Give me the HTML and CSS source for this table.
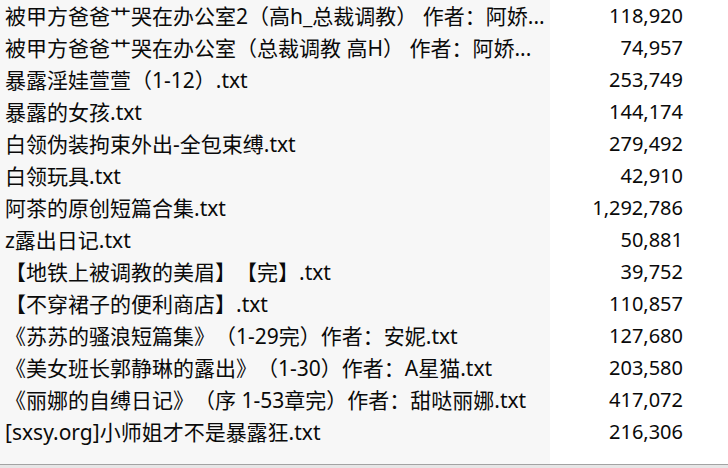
FILE: index.html
```html
<!DOCTYPE html>
<html lang="zh-CN">
<head>
<meta charset="utf-8">
<title>文件列表</title>
<link rel="stylesheet" href="styles.css">
</head>
<body>
<div class="list">
  <div class="row"><span class="name">被甲方爸爸艹哭在办公室2（高h_总裁调教） 作者：阿娇...</span><span class="size">118,920</span></div>
  <div class="row"><span class="name">被甲方爸爸艹哭在办公室（总裁调教 高H） 作者：阿娇...</span><span class="size">74,957</span></div>
  <div class="row"><span class="name">暴露淫娃萱萱（1-12）.txt</span><span class="size">253,749</span></div>
  <div class="row"><span class="name">暴露的女孩.txt</span><span class="size">144,174</span></div>
  <div class="row"><span class="name">白领伪装拘束外出-全包束缚.txt</span><span class="size">279,492</span></div>
  <div class="row"><span class="name">白领玩具.txt</span><span class="size">42,910</span></div>
  <div class="row"><span class="name">阿茶的原创短篇合集.txt</span><span class="size">1,292,786</span></div>
  <div class="row"><span class="name">z露出日记.txt</span><span class="size">50,881</span></div>
  <div class="row"><span class="name">【地铁上被调教的美眉】【完】.txt</span><span class="size">39,752</span></div>
  <div class="row"><span class="name">【不穿裙子的便利商店】.txt</span><span class="size">110,857</span></div>
  <div class="row"><span class="name">《苏苏的骚浪短篇集》（1-29完）作者：安妮.txt</span><span class="size">127,680</span></div>
  <div class="row"><span class="name">《美女班长郭静琳的露出》（1-30）作者：A星猫.txt</span><span class="size">203,580</span></div>
  <div class="row"><span class="name">《丽娜的自缚日记》（序 1-53章完）作者：甜哒丽娜.txt</span><span class="size">417,072</span></div>
  <div class="row"><span class="name">[sxsy.org]小师姐才不是暴露狂.txt</span><span class="size">216,306</span></div>
</div>
<div class="footer"></div>
</body>
</html>
```

FILE: styles.css
```css
html, body {
  margin: 0;
  padding: 0;
  background: #ffffff;
}

body {
  width: 728px;
  height: 468px;
  overflow: hidden;
  font-family: "Noto Sans", "Noto Sans CJK SC", sans-serif;
  font-size: 20px;
  color: #0a0a0a;
}

.list {
  height: 464px;
  border-bottom: 1px solid #a3a3a3;
  background: linear-gradient(to right, #f7f7f7 550px, #ffffff 550px);
  display: flex;
  flex-direction: column;
}

.row {
  display: grid;
  grid-template-columns: 550px 1fr;
  height: 32px;
  line-height: 32px;
}

.name {
  padding-left: 5px;
  font-size: 21px;
  text-spacing-trim: space-all;
  white-space: nowrap;
  overflow: hidden;
}

.size {
  text-align: right;
  padding-right: 45px;
  white-space: nowrap;
}

.footer {
  height: 3px;
  background: #e6e6e6;
}
```
